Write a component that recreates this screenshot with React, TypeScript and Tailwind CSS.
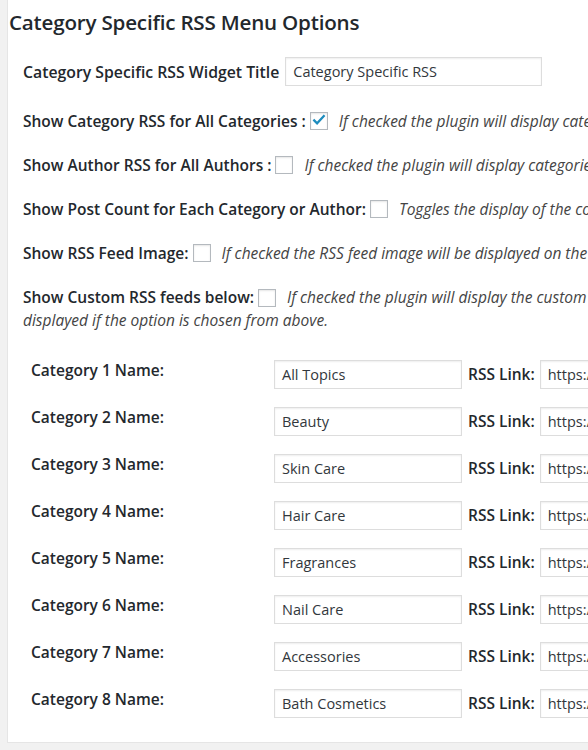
import React from "react";

const categories = [
  "All Topics",
  "Beauty",
  "Skin Care",
  "Hair Care",
  "Fragrances",
  "Nail Care",
  "Accessories",
  "Bath Cosmetics",
];

const Checkbox = ({ checked = false }: { checked?: boolean }) => (
  <span className="inline-flex h-[18px] w-[18px] shrink-0 items-center justify-center border border-[#b4b9be] bg-white align-middle shadow-[inset_0_1px_2px_rgba(0,0,0,0.1)]">
    {checked && (
      <svg viewBox="0 0 20 20" className="h-[20px] w-[20px] -mt-[2px]">
        <path d="M4 10.5l3.6 3.6L16 5" fill="none" stroke="#1e8cbe" strokeWidth="2.8" strokeLinecap="square" />
      </svg>
    )}
  </span>
);

const TextInput = ({ value, className = "" }: { value: string; className?: string }) => (
  <div
    className={
      "flex h-[29px] items-center border border-[#dddddd] bg-white px-[7px] text-[14.5px] text-[#32373c] shadow-[inset_0_1px_2px_rgba(0,0,0,0.07)] whitespace-nowrap overflow-hidden " +
      className
    }
  >
    {value}
  </div>
);

const OptionRow = ({
  label,
  checked,
  desc,
}: {
  label: string;
  checked?: boolean;
  desc: React.ReactNode;
}) => (
  <div className="flex items-center gap-[4px] whitespace-nowrap">
    <span className="font-semibold text-[#23282d]">{label}</span>
    <Checkbox checked={checked} />
    <span className="ml-[7px] italic text-[#444]">{desc}</span>
  </div>
);

export default function App() {
  return (
    <div
      className="min-h-[750px] w-[588px] overflow-hidden bg-[#f1f1f1] pl-[7px]"
      style={{ fontFamily: '"Open Sans", "Noto Sans", sans-serif' }}
    >
      <div className="w-[900px] border border-[#e5e5e5] border-t-0 bg-white pb-[24px] text-[15.5px] leading-[20px] text-[#444]">
        <h2 className="pl-[1px] pt-[8px] text-[20.6px] font-semibold leading-[28px] text-[#23282d] tracking-[-0.2px]">
          Category Specific RSS Menu Options
        </h2>

        <div className="flex flex-col pl-[15px] pt-[21px]">
          <div className="flex items-center gap-[6px]">
            <span className="text-[15.8px] font-semibold text-[#23282d]">Category Specific RSS Widget Title</span>
            <TextInput value="Category Specific RSS" className="w-[257px]" />
          </div>

          <div className="mt-[25px] flex flex-col gap-[24px]">
            <OptionRow
              label="Show Category RSS for All Categories :"
              checked
              desc="If checked the plugin will display categories for all categories"
            />
            <OptionRow
              label="Show Author RSS for All Authors :"
              desc="If checked the plugin will display categories for all authors"
            />
            <OptionRow
              label="Show Post Count for Each Category or Author:"
              desc="Toggles the display of the count"
            />
            <OptionRow
              label="Show RSS Feed Image:"
              desc="If checked the RSS feed image will be displayed on the widget"
            />
            <div className="-mt-[1px] whitespace-nowrap leading-[23px]">
              <span className="inline-flex items-center gap-[4px]">
                <span className="font-semibold text-[#23282d]">Show Custom RSS feeds below:</span>
                <Checkbox />
                <span className="ml-[7px] italic">If checked the plugin will display the custom RSS feeds below instead, these feeds will only be</span>
              </span>
              <br />
              <span className="italic">displayed if the option is chosen from above.</span>
            </div>
          </div>

          <div className="mt-[28px] flex flex-col gap-[18px] pl-[8px]">
            {categories.map((c, i) => (
              <div key={c} className="flex items-start">
                <span className="w-[243px] font-semibold text-[#23282d] leading-[20px]">
                  Category {i + 1} Name:
                </span>
                <TextInput value={c} className="w-[188px]" />
                <span className="ml-[6px] mt-[4px] font-semibold text-[#23282d]">RSS Link:</span>
                <TextInput value="https://www.example.com/feed" className="ml-[5px] w-[260px]" />
              </div>
            ))}
          </div>
        </div>
      </div>
    </div>
  );
}
